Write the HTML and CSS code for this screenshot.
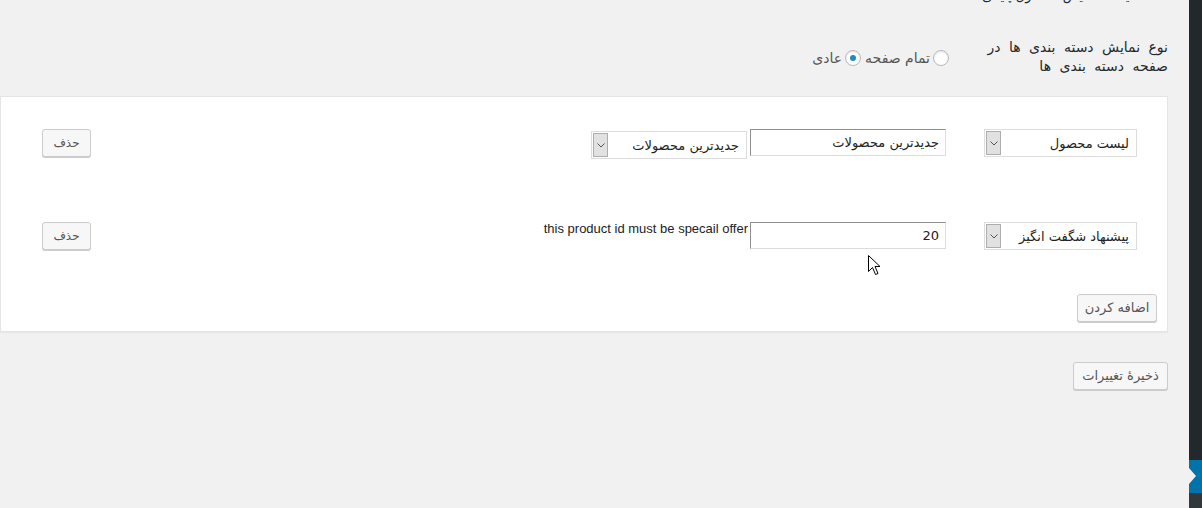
FILE: index.html
```html
<!DOCTYPE html>
<html lang="fa" dir="rtl">
<head>
<meta charset="utf-8">
<title>تنظیمات</title>
<link rel="stylesheet" href="styles.css">
</head>
<body>
<div class="shell">
  <aside class="adminmenu">
    <div class="menu-current"></div>
    <div class="menu-rest"></div>
  </aside>
  <main class="content">
    <div class="cut-title">تنظیمات نمایش محصول پایانی</div>
    <div class="form-row">
      <div class="form-label">نوع نمایش دسته بندی ها در<br>صفحه دسته بندی ها</div>
      <div class="form-field">
        <label class="radio-opt"><span class="radio"></span>تمام صفحه</label>
        <label class="radio-opt"><span class="radio checked"></span>عادی</label>
      </div>
    </div>

    <section class="card">
      <div class="item-row">
        <div class="select sel-type"><span class="sel-text">لیست محصول</span><span class="sel-arrow"><svg width="8" height="5" viewBox="0 0 8 5"><path d="M0.5 0.5 L4 4 L7.5 0.5" fill="none" stroke="#555" stroke-width="1"/></svg></span></div>
        <div class="text-input">جدیدترین محصولات</div>
        <div class="select sel-order"><span class="sel-text">جدیدترین محصولات</span><span class="sel-arrow"><svg width="8" height="5" viewBox="0 0 8 5"><path d="M0.5 0.5 L4 4 L7.5 0.5" fill="none" stroke="#555" stroke-width="1"/></svg></span></div>
        <button class="btn btn-del">حذف</button>
      </div>
      <div class="item-row">
        <div class="select sel-type"><span class="sel-text">پیشنهاد شگفت انگیز</span><span class="sel-arrow"><svg width="8" height="5" viewBox="0 0 8 5"><path d="M0.5 0.5 L4 4 L7.5 0.5" fill="none" stroke="#555" stroke-width="1"/></svg></span></div>
        <div class="text-input">20</div>
        <div class="hint" dir="ltr">this product id must be specail offer</div>
        <button class="btn btn-del">حذف</button>
      </div>
      <div class="add-row">
        <button class="btn btn-add">اضافه کردن</button>
      </div>
    </section>

    <div class="save-row">
      <button class="btn btn-save">ذخیرهٔ تغییرات</button>
    </div>
  </main>
</div>
<svg class="cursor" width="13" height="21" viewBox="0 0 13 21"><path d="M0.5 0.5 L0.5 16.5 L4.5 12.5 L7.5 19.5 L10 18.5 L7 11.5 L12 11.5 Z" fill="#fff" stroke="#000" stroke-width="1" stroke-linejoin="miter"/></svg>
</body>
</html>
```

FILE: styles.css
```css
html, body {
  margin: 0;
  padding: 0;
  height: 100%;
  background: #f1f1f1;
  overflow: hidden;
}
body {
  font-family: "DejaVu Sans", "Noto Sans", sans-serif;
  font-size: 12px;
  color: #23282d;
  position: relative;
}
.shell {
  display: flex;
  direction: rtl;
  height: 508px;
}
.adminmenu {
  width: 13px;
  flex: none;
  background: #23282d;
  display: flex;
  flex-direction: column;
}
.menu-current {
  margin-top: 460px;
  height: 33px;
  background: #0073aa;
  position: relative;
}
.menu-current::before {
  content: "";
  position: absolute;
  top: 8px;
  left: 0;
  width: 0;
  border-top: 8px solid transparent;
  border-bottom: 8px solid transparent;
  border-left: 7px solid #f1f1f1;
}
.menu-rest {
  flex: 1;
  background: #32373c;
}
.content {
  flex: 1;
  padding-left: 0;
  padding-right: 21px;
  display: flex;
  flex-direction: column;
}
.cut-title {
  margin-top: -13px;
  margin-right: 20px;
  font-size: 13px;
  line-height: 18px;
  color: #23282d;
}
.form-row {
  display: flex;
  align-items: center;
  margin-top: 33px;
}
.form-label {
  width: 219px;
  flex: none;
  font-size: 14px;
  line-height: 19px;
  word-spacing: 4px;
  color: #23282d;
}
.form-field {
  display: flex;
  align-items: center;
  gap: 4px;
  padding-top: 1px;
}
.radio-opt {
  display: flex;
  align-items: center;
  gap: 3px;
  font-size: 14px;
  color: #555;
}
.radio {
  width: 14px;
  height: 14px;
  border: 1px solid #b4b9be;
  border-radius: 50%;
  background: #fff;
  box-shadow: inset 0 1px 2px rgba(0,0,0,.1);
  position: relative;
}
.radio.checked::after {
  content: "";
  position: absolute;
  left: 4px;
  top: 4px;
  width: 6px;
  height: 6px;
  border-radius: 50%;
  background: #1e8cbe;
}
.card {
  margin-top: 20px;
  background: #fff;
  border: 1px solid #e5e5e5;
  padding: 32px 10px 9px 41px;
  box-shadow: 0 1px 1px rgba(0,0,0,.04);
}
.item-row {
  display: flex;
  align-items: flex-start;
  height: 28px;
  margin-bottom: 65px;
  margin-right: 20px;
}
.item-row:nth-child(2) {
  margin-bottom: 44px;
}
.select {
  display: flex;
  align-items: stretch;
  height: 28px;
  box-sizing: border-box;
  border: 1px solid #ddd;
  background: #fff;
  padding: 1px;
}
.sel-type {
  width: 153px;
}
.sel-order {
  width: 156px;
  margin-top: 2px;
  margin-right: 3px;
}
.sel-text {
  flex: 1;
  display: flex;
  align-items: center;
  padding-right: 6px;
  font-size: 13px;
  color: #222;
  white-space: nowrap;
}
.sel-arrow {
  width: 15px;
  flex: none;
  background: #e1e1e1;
  border: 1px solid #adadad;
  box-sizing: border-box;
  display: flex;
  align-items: center;
  justify-content: center;
}
.text-input {
  width: 196px;
  height: 27px;
  box-sizing: border-box;
  margin-right: 38px;
  border: 1px solid #ddd;
  border-top-color: #8f8f8f;
  border-left-color: #8f8f8f;
  background: #fff;
  display: flex;
  align-items: center;
  padding-right: 6px;
  font-size: 13px;
  color: #222;
}
.hint {
  margin-right: 2px;
  margin-top: 0;
  font-family: "Liberation Sans", Arial, sans-serif;
  font-size: 13px;
  line-height: 14px;
  color: #222;
}
.btn {
  font-family: "DejaVu Sans", "Noto Sans", sans-serif;
  font-size: 12px;
  color: #555;
  background: #f7f7f7;
  border: 1px solid #ccc;
  border-radius: 3px;
  box-shadow: 0 1px 0 #ccc;
  height: 28px;
  padding: 0 4px;
  line-height: 26px;
  box-sizing: border-box;
  margin: 0;
  white-space: nowrap;
}
.btn-del {
  width: 49px;
  margin-right: auto;
}
.add-row {
  display: flex;
}
.btn-add {
  width: 80px;
  font-size: 13px;
}
.save-row {
  display: flex;
  margin-top: 30px;
}
.btn-save {
  width: 95px;
  font-size: 13px;
}
.cursor {
  position: absolute;
  left: 868px;
  top: 255px;
}
```
